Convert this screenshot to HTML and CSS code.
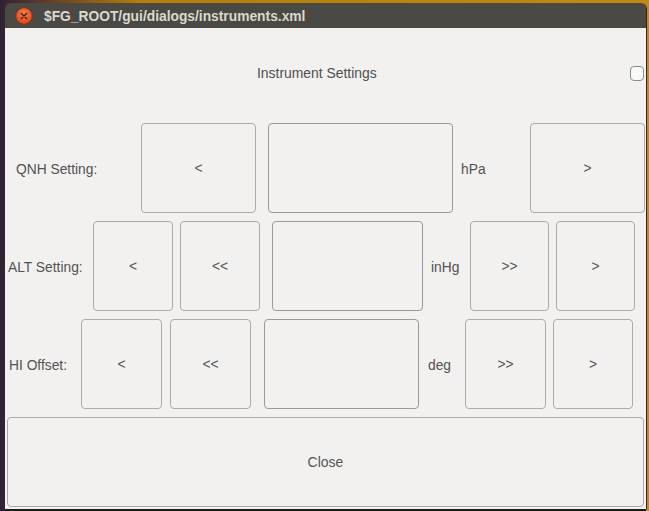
FILE: index.html
```html
<!DOCTYPE html>
<html>
<head>
<meta charset="utf-8">
<link rel="stylesheet" href="styles.css">
</head>
<body>
<div class="window">
  <div class="titlebar">
    <svg class="close-icon" width="18" height="18" viewBox="0 0 18 18">
      <defs>
        <radialGradient id="cg" cx="50%" cy="35%" r="65%">
          <stop offset="0" stop-color="#f7804f"/>
          <stop offset="1" stop-color="#d5441a"/>
        </radialGradient>
      </defs>
      <circle cx="9" cy="9" r="8.2" fill="url(#cg)" stroke="#8a2e10" stroke-width="0.8"/>
      <path d="M6.4 6.4 L11.6 11.6 M11.6 6.4 L6.4 11.6" stroke="#3a1608" stroke-width="1.3" stroke-linecap="round"/>
    </svg>
    <span class="title">$FG_ROOT/gui/dialogs/instruments.xml</span>
  </div>
  <div class="content">
    <div class="header">
      <span class="heading">Instrument Settings</span>
      <span class="checkbox"></span>
    </div>
    <div class="row r1">
      <span class="lbl">QNH Setting:</span>
      <div class="btn b1">&lt;</div>
      <div class="field f1"></div>
      <span class="unit u1">hPa</span>
      <div class="btn b1">&gt;</div>
    </div>
    <div class="row r2">
      <span class="lbl">ALT Setting:</span>
      <div class="btn b2">&lt;</div>
      <div class="btn b2 gap">&lt;&lt;</div>
      <div class="field f2"></div>
      <span class="unit u2">inHg</span>
      <div class="btn b2n">&gt;&gt;</div>
      <div class="btn b2n gap">&gt;</div>
    </div>
    <div class="row r3">
      <span class="lbl">HI Offset:</span>
      <div class="btn b3">&lt;</div>
      <div class="btn b3 gap3">&lt;&lt;</div>
      <div class="field f3"></div>
      <span class="unit u3">deg</span>
      <div class="btn b3">&gt;&gt;</div>
      <div class="btn b3r">&gt;</div>
    </div>
    <div class="close-row">
      <div class="btn close-btn">Close</div>
    </div>
  </div>
</div>
</body>
</html>
```

FILE: styles.css
```css
html, body {
  margin: 0;
  padding: 0;
}
body {
  width: 649px;
  height: 511px;
  overflow: hidden;
  background: linear-gradient(to right, #2a2433 0, #3a2232 5px, #b57d0c 140px, #c08a14 100%);
  font-family: "Liberation Sans", Arial, sans-serif;
  display: flex;
  flex-direction: column;
}
.window {
  margin: 3px 3px 2px 5px;
  width: 641px;
  height: 506px;
  display: flex;
  flex-direction: column;
  border-radius: 6px 6px 0 0;
  overflow: hidden;
  box-shadow: 1px 0 0 #2b2a27, 0 2px 0 #1d1c1a;
}
.titlebar {
  height: 25px;
  background: #4a4944;
  display: flex;
  align-items: center;
  flex-shrink: 0;
}
.close-icon {
  margin-left: 10px;
  margin-top: 1px;
}
.title {
  margin-left: 11px;
  color: #dcd8cf;
  font-weight: bold;
  font-size: 13.8px;
  margin-top: 1px;
}
.content {
  flex: 1;
  background: #f2f1f0;
  display: flex;
  flex-direction: column;
  color: #525252;
  font-size: 13.8px;
}
.header {
  height: 90px;
  margin-bottom: 5px;
  display: flex;
  align-items: center;
}
.heading {
  margin-left: 252px;
  font-size: 13.9px;
  color: #4e4e4e;
}
.checkbox {
  margin-left: auto;
  margin-right: 2px;
  width: 12px;
  height: 13px;
  border: 1px solid #8c8a86;
  border-radius: 4px;
  background: #f9f9f8;
}
.row {
  height: 90px;
  margin-bottom: 8px;
  display: flex;
  align-items: center;
}
.btn {
  box-sizing: border-box;
  height: 90px;
  border: 1px solid #adaba7;
  border-radius: 4px;
  background: #f2f1f0;
  display: flex;
  align-items: center;
  justify-content: center;
  color: #555;
  font-size: 13.8px;
}
.field {
  box-sizing: border-box;
  height: 90px;
  border: 1px solid #9c9a94;
  border-radius: 4px;
  background: #f2f1f0;
}
.lbl, .unit {
  flex-shrink: 0;
  padding-top: 2px;
  white-space: nowrap;
}
/* row 1 */
.r1 .lbl { margin-left: 11px; width: 125px; }
.b1 { width: 115px; }
.f1 { margin-left: 12px; width: 185px; }
.u1 { margin-left: 8px; width: 69px; }
/* row 2 */
.r2 .lbl { margin-left: 3px; width: 85px; }
.b2 { width: 80px; }
.b2.gap { margin-left: 7px; }
.f2 { margin-left: 12px; width: 151px; }
.u2 { margin-left: 8px; width: 39px; }
.b2n { width: 79px; }
.b2n.gap { margin-left: 7px; }
/* row 3 */
.r3 .lbl { margin-left: 4px; width: 72px; }
.b3 { width: 81px; }
.b3.gap3 { margin-left: 8px; }
.f3 { margin-left: 13px; width: 155px; }
.u3 { margin-left: 9px; width: 37px; }
.b3r { margin-left: 7px; width: 80px; }
/* close */
.close-row {
  display: flex;
  height: 90px;
}
.close-btn {
  margin-left: 2px;
  width: 637px;
  font-size: 14px;
}
```
